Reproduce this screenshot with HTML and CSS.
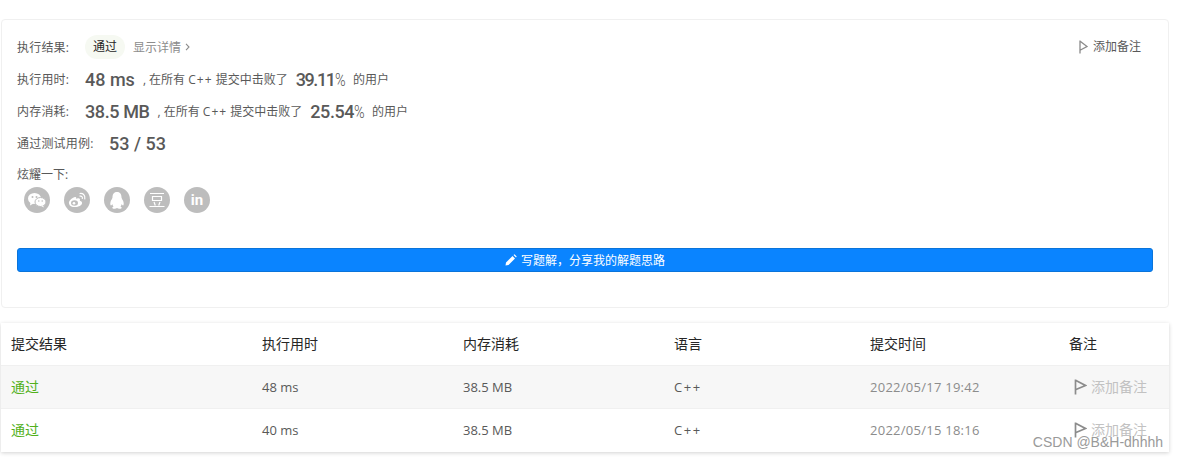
FILE: index.html
```html
<!DOCTYPE html>
<html lang="zh">
<head>
<meta charset="utf-8">
<title>提交结果</title>
<link rel="stylesheet" href="styles.css">
</head>
<body>
<section class="card">
  <div class="note-top">
    <svg class="flag" width="9" height="14" viewBox="0 0 9 14"><path d="M1 0.500V13.500M1.500 1.500L8 6.500L1.500 10" fill="none" stroke="#8a8a8a" stroke-width="1.300"/></svg>
    <span>添加备注</span>
  </div>
  <div class="line line-result">
    <span class="label">执行结果:</span>
    <span class="pill">通过</span>
    <span class="details">显示详情</span>
    <svg class="chev" width="5" height="8" viewBox="0 0 5 8"><path d="M1 0.800L4 4L1 7.200" fill="none" stroke="#8c8c8c" stroke-width="1.100"/></svg>
  </div>
  <div class="line line-stat">
    <span class="label">执行用时:</span>
    <span class="big">48 ms</span>
    <span class="small">, 在所有 <span class="cpp">C++</span> 提交中击败了</span>
    <span class="big"><span class="narrow">39.11</span><span class="pct">%</span></span>
    <span class="small user">的用户</span>
  </div>
  <div class="line line-stat">
    <span class="label">内存消耗:</span>
    <span class="big tight">38.5 MB</span>
    <span class="small">, 在所有 <span class="cpp">C++</span> 提交中击败了</span>
    <span class="big tight">25.54<span class="pct">%</span></span>
    <span class="small user">的用户</span>
  </div>
  <div class="line line-stat">
    <span class="label label-wide">通过测试用例:</span>
    <span class="big">53 / 53</span>
  </div>
  <div class="share-label">炫耀一下:</div>
  <div class="share">
    <span class="circle"><svg width="20" height="16" viewBox="0 0 20 16"><ellipse cx="7.500" cy="6.500" rx="6.500" ry="5.500" fill="#fff"/><path d="M3.500 10.500L3 13.500L6.500 11.500Z" fill="#fff"/><ellipse cx="13.500" cy="10" rx="5.500" ry="4.500" fill="#fff" stroke="#bdbdbd"/><path d="M16 13.500L17 15.500L14 14Z" fill="#fff"/><circle cx="5.500" cy="5" r="1" fill="#bdbdbd"/><circle cx="9.500" cy="5" r="1" fill="#bdbdbd"/><circle cx="11.800" cy="9" r=".8" fill="#bdbdbd"/><circle cx="15.200" cy="9" r=".8" fill="#bdbdbd"/></svg></span>
    <span class="circle"><svg width="20" height="16" viewBox="0 0 20 16"><path d="M8 5C4 6.500 1.500 9 2 11.500C2.500 14.500 6 15.500 9.500 15C13 14.500 15.500 12.500 15 10.500C14.700 9.300 13.500 9 12.800 8.700C13.300 7.500 13 6.300 11.500 6.300C10.500 6.300 9.500 6.800 9.200 7C9.500 5.500 9 4.600 8 5Z" fill="#fff"/><ellipse cx="7.500" cy="11" rx="3.500" ry="2.700" fill="#bdbdbd"/><circle cx="7" cy="11.200" r="1.300" fill="#fff"/><path d="M13 1.500C15.500 1 18.500 3 17.800 6.800M13 4.200C14.500 3.800 15.800 5 15.300 6.500" fill="none" stroke="#fff" stroke-width="1.200" stroke-linecap="round"/></svg></span>
    <span class="circle"><svg width="18" height="19" viewBox="0 0 18 19"><path d="M9 1C5.500 1 4.500 3.500 4.500 6.500C4.500 7.500 3 9 2.500 11C2 13 2.500 14.500 3 14.500C3.500 14.500 4 13.500 4.300 13C4.500 14 5 15 5.500 15.500C4.500 16 4 16.500 4.500 17.300C5.500 18.200 8 17.800 9 17C10 17.800 12.500 18.200 13.500 17.300C14 16.500 13.500 16 12.500 15.500C13 15 13.500 14 13.700 13C14 13.500 14.500 14.500 15 14.500C15.500 14.500 16 13 15.500 11C15 9 13.500 7.500 13.500 6.500C13.500 3.500 12.500 1 9 1Z" fill="#fff"/></svg></span>
    <span class="circle"><svg width="16" height="16" viewBox="0 0 16 16"><path d="M1 1.500H15M3.500 4.500H12.500V8.500H3.500ZM5 10L6.300 13.500M11 10L9.700 13.500M0.500 14.500H15.500" fill="none" stroke="#fff" stroke-width="1.200"/></svg></span>
    <span class="circle"><span class="in">in</span></span>
  </div>
  <button class="solution" type="button">
    <svg width="12" height="12" viewBox="0 0 12 12"><path d="M0.500 11.500L1 8.500L7.500 2L10 4.500L3.500 11ZM8.500 1L9.500 0.300L11.700 2.500L11 3.500Z" fill="#fff"/></svg>
    <span>写题解，分享我的解题思路</span>
  </button>
</section>

<section class="panel">
  <table class="results">
    <thead>
      <tr>
        <th class="c1">提交结果</th><th class="c2">执行用时</th><th class="c3">内存消耗</th><th class="c4">语言</th><th class="c5">提交时间</th><th>备注</th>
      </tr>
    </thead>
    <tbody>
      <tr class="odd">
        <td class="status"><a class="ok">通过</a></td><td class="num">48 ms</td><td class="num">38.5 MB</td><td class="num lang">C++</td><td class="num time">2022/05/17 19:42</td>
        <td class="note"><svg width="13" height="16" viewBox="0 0 13 16"><path d="M1.500 0.500V15.500M2 1.500L11.500 6.500L2 10.500" fill="none" stroke="#8c8c8c" stroke-width="1.700"/></svg><span>添加备注</span></td>
      </tr>
      <tr>
        <td class="status"><a class="ok">通过</a></td><td class="num">40 ms</td><td class="num">38.5 MB</td><td class="num lang">C++</td><td class="num time">2022/05/15 18:16</td>
        <td class="note"><svg width="13" height="16" viewBox="0 0 13 16"><path d="M1.500 0.500V15.500M2 1.500L11.500 6.500L2 10.500" fill="none" stroke="#8c8c8c" stroke-width="1.700"/></svg><span>添加备注</span></td>
      </tr>
    </tbody>
  </table>
  <div class="watermark">CSDN @B&amp;H-dhhhh</div>
</section>
</body>
</html>
```
FILE: styles.css
```css
* { box-sizing: border-box; }
html, body { margin: 0; height: 457px; overflow: hidden; background: #fff; }
body {
  padding: 19px 9px 0 1px;
  font-family: "Open Sans", "Noto Sans CJK SC", sans-serif;
  color: #595959;
}
.card {
  position: relative;
  height: 289px;
  border: 1px solid #f0f0f0;
  border-radius: 4px;
  padding: 15px 15px 0;
}
.note-top {
  position: absolute;
  top: 19px;
  right: 27px;
  display: flex;
  align-items: center;
  gap: 5px;
  font-size: 12px;
  line-height: 16px;
  color: #595959;
}
.line { display: flex; align-items: center; font-size: 12px; }
.line-result { height: 24px; margin-bottom: 4px; }
.line-stat { height: 32px; }
.label { width: 68px; font-size: 12px; letter-spacing: .2px; color: #595959; }
.label-wide { width: 92px; }
.pill {
  width: 40px;
  height: 24px;
  line-height: 24px;
  text-align: center;
  background: #f6f9f2;
  border-radius: 12px;
  color: #262626;
}
.details { margin-left: 8px; color: #8c8c8c; }
.chev { margin-left: 4px; }
.big {
  font-family: "Roboto", "Noto Sans CJK SC", sans-serif;
  font-size: 18px;
  font-weight: 500;
  color: #595959;
}
.tight { letter-spacing: -.4px; }
.narrow { letter-spacing: -1.4px; }
.pct {
  display: inline-block;
  margin-right: -3px;
  font-weight: 300;
  transform: scaleX(.8);
  transform-origin: left center;
}
.small { margin: 0 8px; font-size: 12px; color: #595959; }
.cpp { letter-spacing: 1px; }
.share-label { margin-top: 7px; font-size: 12px; line-height: 18px; color: #595959; }
.share { display: flex; gap: 14px; margin: 3px 0 0 7px; }
.circle {
  width: 26px;
  height: 26px;
  border-radius: 50%;
  background: #bdbdbd;
  display: flex;
  align-items: center;
  justify-content: center;
}
.in { color: #fff; font: 700 15px "Roboto", sans-serif; }
.solution {
  display: flex;
  align-items: center;
  justify-content: center;
  gap: 4px;
  width: 100%;
  height: 24px;
  margin-top: 35px;
  padding: 0;
  border: 1px solid #0a74da;
  border-radius: 3px;
  background: #0a84ff;
  color: #fff;
  font: 12px "Open Sans", "Noto Sans CJK SC", sans-serif;
}
.panel {
  position: relative;
  margin-top: 15px;
  height: 129px;
  box-shadow: 0 1px 4px rgba(0, 0, 0, .18);
}
.results {
  width: 100%;
  border-collapse: collapse;
  table-layout: fixed;
  font-size: 14px;
}
.results th, .results td { padding: 0 0 0 10px; text-align: left; }
.results th { height: 42px; padding-bottom: 2px; font-weight: 400; color: #262626; }
.results td { height: 43px; border-top: 1px solid #f0f0f0; color: #595959; }
.results .status { padding-bottom: 2px; }
.results .num { font-size: 13px; }
.results .lang { letter-spacing: 1.6px; }
.c1 { width: 251px; }
.c2 { width: 201px; }
.c3 { width: 211px; }
.c4 { width: 196px; }
.c5 { width: 199px; }
.odd { background: #f7f7f7; }
.ok { color: #52b01c; }
.results .time { color: #8c8c8c; letter-spacing: .26px; }
.results .note { color: #c2c2c2; padding-left: 15px; padding-bottom: 1px; }
.note svg { vertical-align: -3px; margin-right: 4px; }
.watermark {
  position: absolute;
  right: 6px;
  bottom: 1px;
  font: 14px/18px "Liberation Sans", sans-serif;
  color: #9a9a9a;
}
```
